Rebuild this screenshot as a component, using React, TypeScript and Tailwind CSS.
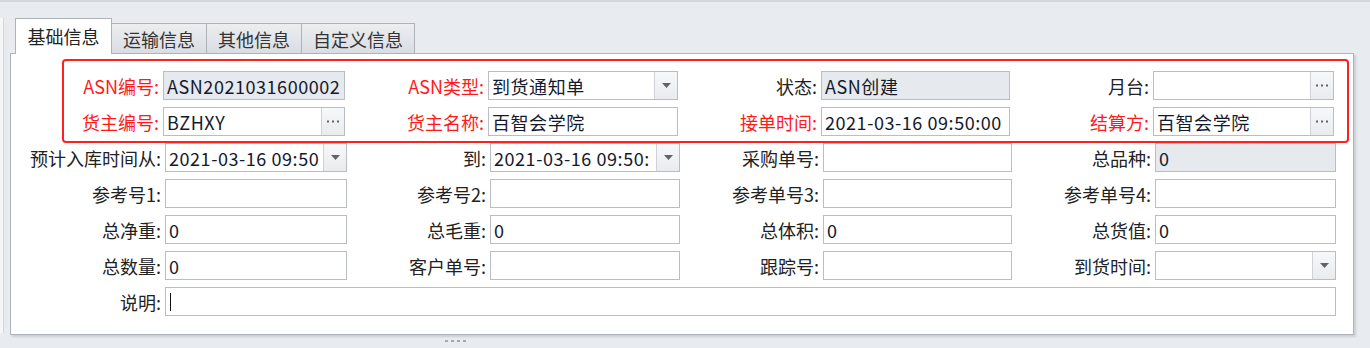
type Kind = "text" | "readonly" | "select" | "ellipsis";

type Field = {
  label: string;
  value?: string;
  red?: boolean;
  kind?: Kind;
  caret?: boolean;
};

const inputWidths = ["w-[182px]", "w-[190px]", "w-[189px]", "w-[181px]"];

const Triangle = () => (
  <svg width="9" height="5" viewBox="0 0 9 5">
    <path d="M0 0h9L4.5 5z" fill="#5f646b" />
  </svg>
);

const Dots = () => (
  <svg width="12" height="3" viewBox="0 0 12 3">
    <rect x="0" y="0.5" width="2" height="2" fill="#5f646b" />
    <rect x="5" y="0.5" width="2" height="2" fill="#5f646b" />
    <rect x="10" y="0.5" width="2" height="2" fill="#5f646b" />
  </svg>
);

const Input = ({ field, width }: { field: Field; width: string }) => {
  const kind = field.kind ?? "text";
  const bg = kind === "readonly" ? "bg-[#e6e9ed]" : "bg-white";
  return (
    <div className={`${width} h-[29px] shrink-0 flex border border-[#b9bdc4] ${bg}`}>
      <div className="flex-1 min-w-0 overflow-hidden whitespace-nowrap flex items-center pl-[3px] text-[#141a2e] tracking-[0.55px]">
        {field.caret && <span className="ml-[1px] w-px h-[18px] bg-[#111]" />}
        {field.value}
      </div>
      {kind === "select" && (
        <div className="w-[23px] shrink-0 flex items-center justify-center border-l border-[#cfd3d8] bg-gradient-to-b from-[#f7f8f9] to-[#e9ebee]">
          <Triangle />
        </div>
      )}
      {kind === "ellipsis" && (
        <div className="w-[23px] shrink-0 flex items-center justify-center border-l border-[#cfd3d8] bg-gradient-to-b from-[#f7f8f9] to-[#e9ebee]">
          <Dots />
        </div>
      )}
    </div>
  );
};

const Row = ({ fields, firstLabel }: { fields: Field[]; firstLabel: string }) => (
  <div className="flex h-[29px]">
    {fields.map((f, i) => (
      <div key={i} className="flex">
        <div
          className={`${i === 0 ? firstLabel : "w-[143px]"} shrink-0 flex items-center justify-end pr-[4px] whitespace-nowrap ${
            f.red ? "text-[#ff1a1a]" : "text-[#222]"
          }`}
        >
          {f.label}:
        </div>
        <Input field={f} width={fields.length === 1 ? "w-[1171px]" : inputWidths[i]} />
      </div>
    ))}
  </div>
);

const tabs = ["运输信息", "其他信息", "自定义信息"];

export default function App() {
  return (
    <div className="w-[1370px] h-[348px] overflow-hidden bg-[#e8ebef] border-t-2 border-[#d3d7dc] font-['Noto_Sans_CJK_SC',sans-serif] text-[18px] leading-none">
      <div className="flex h-full">
        <div className="w-[4px] mt-[16px] h-[315px] bg-[#f5f6f8] border-r border-[#d2d6db] shrink-0" />
        <div className="flex flex-col pl-[6px] pt-[15px]">
          {/* tabs */}
          <div className="flex items-end pl-[5px] h-[36px]">
            <div className="w-[97px] h-[36px] bg-white border border-b-0 border-[#aeb3ba] flex items-center justify-center text-[#222] relative z-10 -mb-px pb-[2px]">
              基础信息
            </div>
            {tabs.map((t) => (
              <div
                key={t}
                className="h-[31px] px-[11px] border border-l-0 border-[#aeb3ba] bg-gradient-to-b from-[#eceef1] to-[#d9dde2] flex items-center justify-center text-[#333] -mb-px"
              >
                {t}
              </div>
            ))}
          </div>
          {/* panel */}
          <div className="w-[1344px] h-[282px] bg-white border border-[#aeb3ba] shadow-[2px_2px_2px_rgba(0,0,0,0.12)] flex flex-col">
            <div className="ml-[51px] mt-[5px] w-[1287px] h-[84px] border-2 border-[#ff2020] rounded-[4px] pt-[10px] flex flex-col gap-[7px]">
              <Row
                firstLabel="w-[99px]"
                fields={[
                  { label: "ASN编号", value: "ASN2021031600002", red: true, kind: "readonly" },
                  { label: "ASN类型", value: "到货通知单", red: true, kind: "select" },
                  { label: "状态", value: "ASN创建", kind: "readonly" },
                  { label: "月台", kind: "ellipsis" },
                ]}
              />
              <Row
                firstLabel="w-[99px]"
                fields={[
                  { label: "货主编号", value: "BZHXY", red: true, kind: "ellipsis" },
                  { label: "货主名称", value: "百智会学院", red: true },
                  { label: "接单时间", value: "2021-03-16 09:50:00", red: true },
                  { label: "结算方", value: "百智会学院", red: true, kind: "ellipsis" },
                ]}
              />
            </div>
            <div className="flex flex-col gap-[7px]">
              <Row
                firstLabel="w-[154px]"
                fields={[
                  { label: "预计入库时间从", value: "2021-03-16 09:50", kind: "select" },
                  { label: "到", value: "2021-03-16 09:50:", kind: "select" },
                  { label: "采购单号" },
                  { label: "总品种", value: "0", kind: "readonly" },
                ]}
              />
              <Row
                firstLabel="w-[154px]"
                fields={[
                  { label: "参考号1" },
                  { label: "参考号2" },
                  { label: "参考单号3" },
                  { label: "参考单号4" },
                ]}
              />
              <Row
                firstLabel="w-[154px]"
                fields={[
                  { label: "总净重", value: "0" },
                  { label: "总毛重", value: "0" },
                  { label: "总体积", value: "0" },
                  { label: "总货值", value: "0" },
                ]}
              />
              <Row
                firstLabel="w-[154px]"
                fields={[
                  { label: "总数量", value: "0" },
                  { label: "客户单号" },
                  { label: "跟踪号" },
                  { label: "到货时间", kind: "select" },
                ]}
              />
              <Row firstLabel="w-[154px]" fields={[{ label: "说明", caret: true }]} />
            </div>
          </div>
          {/* grip */}
          <div className="flex gap-[3px] ml-[435px] mt-[5px]">
            <span className="w-[3px] h-[2px] bg-[#a3a8b0]" />
            <span className="w-[3px] h-[2px] bg-[#a3a8b0]" />
            <span className="w-[3px] h-[2px] bg-[#a3a8b0]" />
            <span className="w-[3px] h-[2px] bg-[#a3a8b0]" />
          </div>
        </div>
      </div>
    </div>
  );
}
